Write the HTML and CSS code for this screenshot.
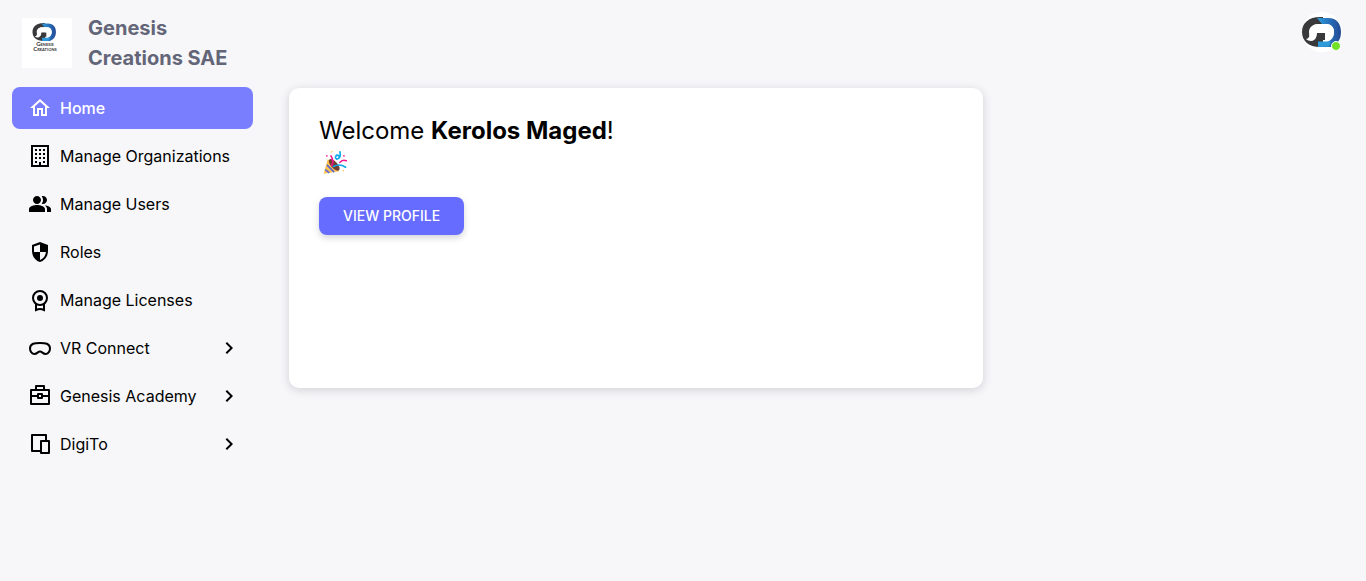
FILE: index.html
```html
<!DOCTYPE html>
<html lang="en">
<head>
<meta charset="utf-8">
<meta name="viewport" content="width=device-width, initial-scale=1">
<title>Genesis Creations SAE</title>
<link rel="stylesheet" href="styles.css">
</head>
<body>
<svg class="defs" width="0" height="0" aria-hidden="true">
  <defs>
    <linearGradient id="blue" x1="0" x2="1" y1="0" y2="0"><stop offset="0" stop-color="#2fa0dc"/><stop offset="0.600" stop-color="#2768b4"/><stop offset="1" stop-color="#254a94"/></linearGradient>
    <symbol id="mark" viewBox="0 5 40 30">
      <path d="M18 5C7 5 0 11 0 20s7 15 18 15h3V21h-7q0 5-4 8-3-3-3-9c0-5 4-8 10-8h4V5Z" fill="#39393b"/>
      <path d="M15 6h11c9 0 13 6 13 14 0 7-3 12-10 15H16l3-5h6c5-2 7-5 7-10 0-5-3-8-8-8h-4Z" fill="url(#blue)"/>
      <path d="M16 29.500h13l-2 5H16Z" fill="#2f9cd9"/>
      <path d="M8 20c0-5 3-8 9-8h7c5 0 8 3 8 8 0 4-3 8-9 8V21h-8q0 7-6 8-3 0-5-2 4 0 4-7Z" fill="#fff"/>
      <path d="M15 21h8v7h-8Z" fill="#39393b"/>
    </symbol>
  </defs>
</svg>
<div class="layout">
  <aside class="sidebar">
    <div class="brand">
      <svg class="brand-logo" viewBox="0 0 50 50" aria-hidden="true">
        <rect width="50" height="50" fill="#fff"/>
        <use href="#mark" x="10" y="5" width="25" height="18"/>
        <text class="logo-text" x="23" y="28" text-anchor="middle">Genesis</text>
        <text class="logo-text" x="23" y="33" text-anchor="middle">Creations</text>
      </svg>
      <h1 class="brand-name">Genesis Creations SAE</h1>
    </div>
    <nav class="menu" aria-label="Main">
      <a class="menu-item active" href="#home">
        <svg class="icon" viewBox="0 0 24 24"><path d="M12 5.690 17 10.190V18H15V12H9V18H7V10.190L12 5.690M12 3 2 12H5V20H11V14H13V20H19V12H22"/></svg>
        <span class="label">Home</span>
      </a>
      <a class="menu-item" href="#organizations">
        <svg class="icon" viewBox="0 0 24 24"><path fill-rule="evenodd" d="M3 1H21V23H3ZM5 3V21H11V18H13V21H19V3ZM7 5h2v2H7ZM11 5h2v2h-2ZM15 5h2v2h-2ZM7 9h2v2H7ZM11 9h2v2h-2ZM15 9h2v2h-2ZM7 13h2v2H7ZM11 13h2v2h-2ZM15 13h2v2h-2ZM7 17h2v2H7ZM15 17h2v2h-2Z"/></svg>
        <span class="label">Manage Organizations</span>
      </a>
      <a class="menu-item" href="#users">
        <svg class="icon" viewBox="0 0 24 24"><path d="M16.670 13.130C18.040 14.060 19 15.320 19 17v3h4v-3c0-2.180-3.570-3.470-6.330-3.870zM15 12c2.210 0 4-1.790 4-4s-1.790-4-4-4c-.47 0-.91.1-1.330.24C14.500 5.270 15 6.580 15 8s-.5 2.730-1.330 3.760c.42.14.86.24 1.330.24zM9 12c2.210 0 4-1.790 4-4s-1.790-4-4-4-4 1.790-4 4 1.790 4 4 4zm0 1c-2.670 0-8 1.340-8 4v3h16v-3c0-2.660-5.330-4-8-4z"/></svg>
        <span class="label">Manage Users</span>
      </a>
      <a class="menu-item" href="#roles">
        <svg class="icon" viewBox="0 0 24 24"><path fill-rule="evenodd" d="M12 2 20 5v6.090c0 5.050-3.410 9.760-8 10.910-4.590-1.150-8-5.860-8-10.910V5ZM12 4.500 6 6.500V12h6ZM12 12v7.930c3.090-1 5.640-4.220 5.960-7.930Z"/></svg>
        <span class="label">Roles</span>
      </a>
      <a class="menu-item" href="#licenses">
        <svg class="icon" viewBox="0 0 24 24"><circle cx="12" cy="10" r="7" fill="none" stroke="currentColor" stroke-width="2"/><circle cx="12" cy="10" r="3"/><path d="M8 16v6q4-2 8 0v-6" fill="none" stroke="currentColor" stroke-width="2"/></svg>
        <span class="label">Manage Licenses</span>
      </a>
      <a class="menu-item" href="#vr">
        <svg class="icon" viewBox="0 0 24 24"><path d="M12 7C7 7 2 7 2 12.500 2 15.500 4 18 6.500 18 9 18 10 15.500 12 15.500s3 2.500 5.500 2.500c2.500 0 4.500-2.500 4.500-5.500C22 7 17 7 12 7Z" fill="none" stroke="currentColor" stroke-width="2"/></svg>
        <span class="label">VR Connect</span>
        <svg class="chevron" viewBox="0 0 24 24"><path d="M8.590 16.580 13.170 12 8.590 7.410 10 6l6 6-6 6Z"/></svg>
      </a>
      <a class="menu-item" href="#academy">
        <svg class="icon" viewBox="0 0 24 24"><path d="M3 6h18v14H3ZM8 6V2h8v4M3 12h7M14 12h7M10 10h4v4h-4Z" fill="none" stroke="currentColor" stroke-width="2" stroke-linejoin="round"/></svg>
        <span class="label">Genesis Academy</span>
        <svg class="chevron" viewBox="0 0 24 24"><path d="M8.590 16.580 13.170 12 8.590 7.410 10 6l6 6-6 6Z"/></svg>
      </a>
      <a class="menu-item" href="#digito">
        <svg class="icon" viewBox="0 0 24 24"><path d="M13 19H4V3h14v6M13 9h8v12h-8Z" fill="none" stroke="currentColor" stroke-width="2" stroke-linejoin="round"/></svg>
        <span class="label">DigiTo</span>
        <svg class="chevron" viewBox="0 0 24 24"><path d="M8.590 16.580 13.170 12 8.590 7.410 10 6l6 6-6 6Z"/></svg>
      </a>
    </nav>
  </aside>
  <div class="page">
    <header class="topbar">
      <button class="avatar" type="button" aria-label="Account">
        <svg viewBox="0 0 40 40" aria-hidden="true">
          <circle cx="20" cy="20" r="20" fill="#fff"/>
          <use href="#mark" x="0" y="5" width="40" height="30"/>
        </svg>
        <span class="status"></span>
      </button>
    </header>
    <main class="content">
      <section class="card">
        <h2 class="welcome">Welcome <strong>Kerolos Maged</strong>!
          <svg class="party" viewBox="0 0 32 32" role="img" aria-label="Party popper">
            <path d="M2 28 7 10q9 5 14 15Z" fill="#ffc34e"/>
            <path d="m6 17 9 9M4 23l5 4M9 13l10 10" stroke="#5967d5" stroke-width="2"/>
            <ellipse cx="15" cy="17" rx="4" ry="9" transform="rotate(-42 15 17)" fill="#713f30"/>
            <g fill="none" stroke-width="2" stroke-linecap="round"><path d="M12 18q3-6-1-12M22 14q3-4 8-2" stroke="#f31390"/><path d="M14 19q8-4 15 1M22 1q2 8-4 9-3-2 0-5 4 0 3 3" stroke="#0da8ec"/></g>
            <g fill="#f31390"><circle cx="6" cy="6" r="1"/><circle cx="27" cy="6" r="1"/></g><g fill="#ffc34e"><circle cx="12" cy="1" r="1"/><circle cx="26" cy="24" r="1"/></g>
          </svg>
        </h2>
        <button class="primary" type="button">VIEW PROFILE</button>
      </section>
    </main>
  </div>
</div>
</body>
</html>
```
FILE: styles.css
```css
* { box-sizing: border-box; }
body {
  margin: 0;
  background: #f7f7f9;
  color: #000;
  font-family: Inter, "Liberation Sans", sans-serif;
  font-size: 16px;
  line-height: 24px;
}
.defs { position: absolute; }
.layout { display: flex; min-height: 100vh; }
.sidebar { flex: 0 0 265px; padding: 13px 12px; }
.brand { display: flex; align-items: center; gap: 16px; padding: 0 10px; margin-bottom: 14px; }
.brand-logo { flex: none; width: 50px; height: 50px; }
.logo-text { font-family: Lato, sans-serif; font-size: 6px; font-variant: small-caps; font-weight: 700; fill: #333; }
.brand-name { margin: 0; color: #636578; font-size: 20px; font-weight: 700; line-height: 30px; }
.menu { display: grid; gap: 6px; }
.menu-item {
  display: flex;
  align-items: center;
  gap: 8px;
  min-height: 42px;
  padding: 9px 12px 9px 16px;
  border-radius: 8px;
  color: #000;
  text-decoration: none;
}
.menu-item.active { background: #797eff; color: #fff; font-weight: 500; }
.icon, .chevron { flex: none; width: 24px; height: 24px; fill: currentColor; }
.label { flex: 1; white-space: nowrap; }
.page { flex: 1; min-width: 0; }
.topbar { display: flex; justify-content: flex-end; padding: 12px 24px; }
.avatar { position: relative; width: 40px; height: 40px; padding: 0; border: 0; border-radius: 50%; background: none; }
.avatar svg { display: block; width: 100%; height: 100%; }
.status { position: absolute; right: 1px; bottom: 1px; width: 10px; height: 10px; border: 1px solid #fff; border-radius: 50%; background: #72e128; }
.content { display: grid; grid-template-columns: repeat(3, 1fr); gap: 24px; padding: 24px; }
.card {
  grid-column: span 2;
  min-height: 300px;
  padding: 27px 30px;
  border-radius: 10px;
  background: #fff;
  box-shadow: 0 2px 10px rgba(76, 78, 100, 0.22);
}
.welcome { margin: 0 0 20px; font-size: 24px; font-weight: 400; line-height: 32px; }
.welcome strong { font-weight: 700; }
.party { display: block; width: 26px; height: 26px; margin: 4px 3px; }
.primary {
  height: 38px;
  padding: 0 24px;
  border: 0;
  border-radius: 8px;
  background: #666cff;
  color: #fff;
  font: 500 14px/24px Inter, "Liberation Sans", sans-serif;
  box-shadow: 0 3px 6px rgba(76, 78, 100, 0.24);
}
```
